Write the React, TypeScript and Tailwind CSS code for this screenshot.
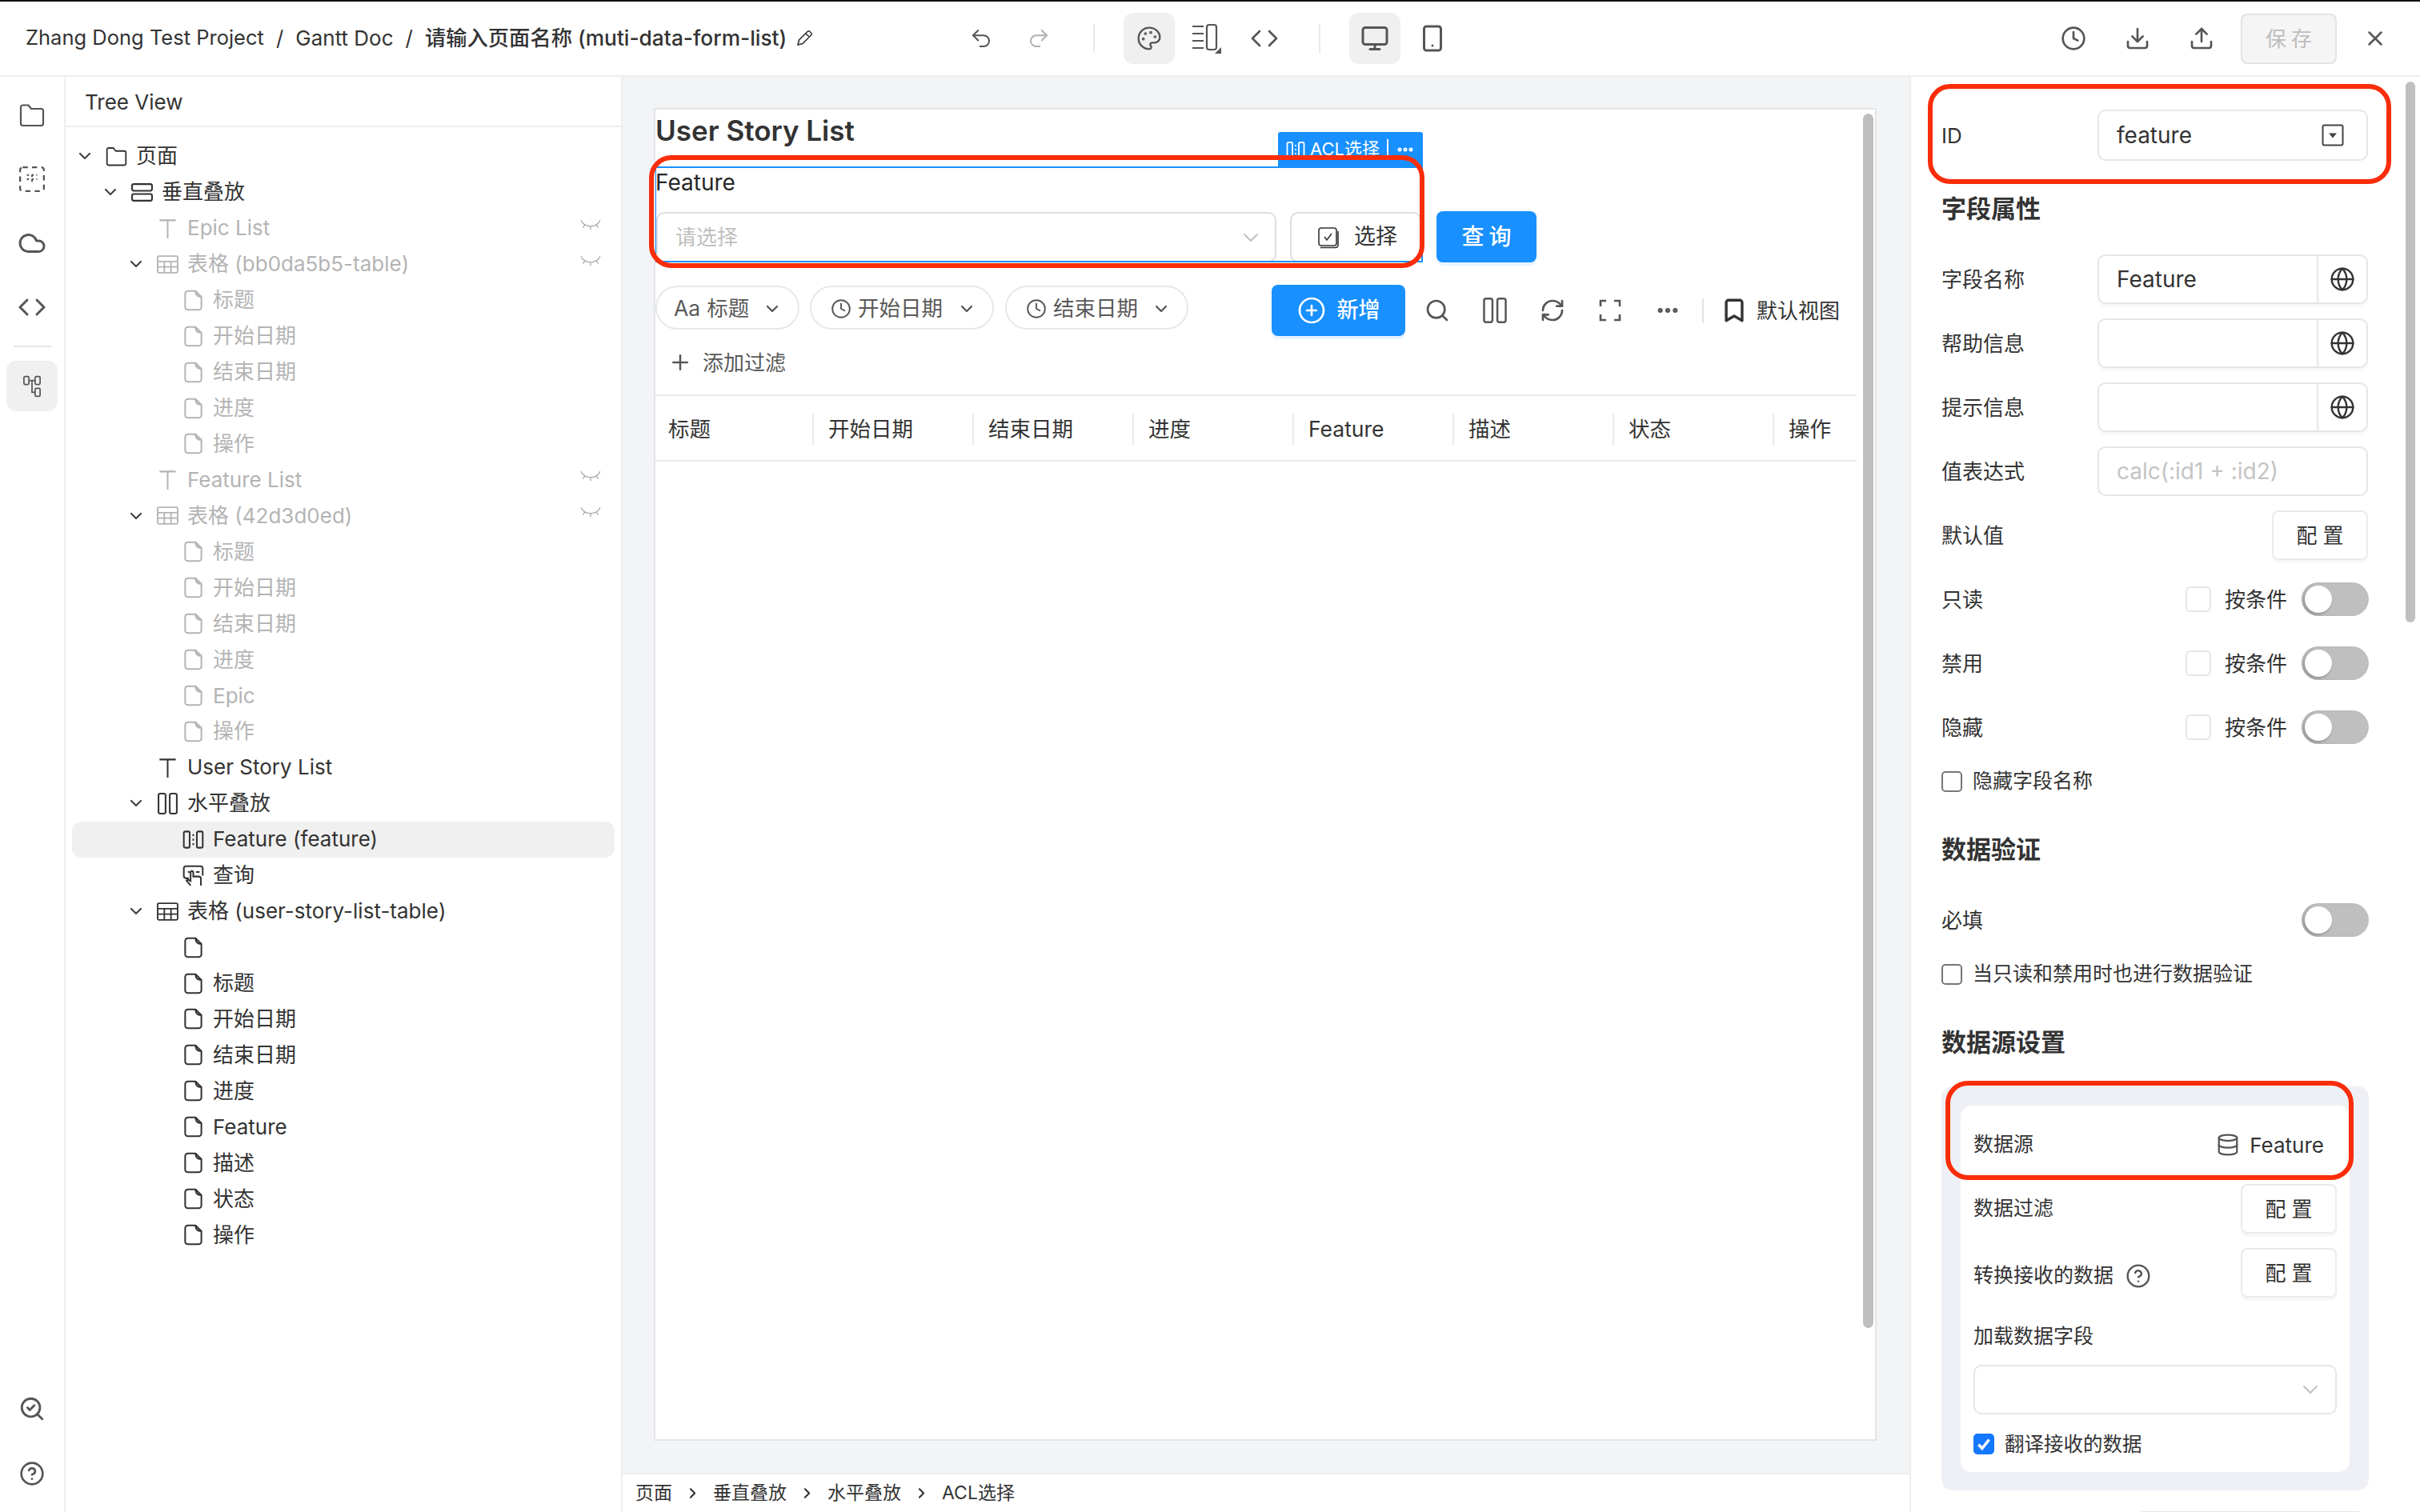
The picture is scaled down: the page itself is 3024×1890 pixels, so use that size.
import { ReactNode } from 'react';
import {
  Bookmark,
  ChevronDown,
  ChevronRight,
  CircleHelp,
  CirclePlus,
  Clock,
  Cloud,
  Code,
  Database,
  Download,
  Ellipsis,
  Globe,
  Monitor,
  Palette,
  Plus,
  Redo2,
  RefreshCw,
  Search,
  SearchCheck,
  Smartphone,
  Undo2,
  Upload,
  X,
} from 'lucide-react';

const FONT = 'font-[Inter,"Noto_Sans_CJK_SC",sans-serif]';

type IconProps = { className?: string };

const DocIcon = ({ className }: IconProps) => (
  <svg viewBox="0 0 24 24" className={className} fill="none" stroke="currentColor" strokeWidth="1.8">
    <path d="M6 1.5h8.5L21 8v11.5a3 3 0 0 1-3 3H6a3 3 0 0 1-3-3v-15a3 3 0 0 1 3-3z" />
    <path d="M14.5 1.5c0 4 2 6.5 6.5 6.5" />
  </svg>
);

const TextIcon = ({ className }: IconProps) => (
  <svg viewBox="0 0 24 24" className={className} fill="none" stroke="currentColor" strokeWidth="1.8">
    <path d="M3 3h18M12 3v20" />
  </svg>
);

const TableIcon = ({ className }: IconProps) => (
  <svg viewBox="0 0 26 24" className={className} fill="none" stroke="currentColor" strokeWidth="1.8">
    <rect x="1" y="2" width="24" height="20" rx="1.5" />
    <path d="M1 8.500h24M1 15h24M9 8.500V22M17 8.500V22" />
  </svg>
);

const HStackIcon = ({ className }: IconProps) => (
  <svg viewBox="0 0 24 26" className={className} fill="none" stroke="currentColor" strokeWidth="2">
    <rect x="1" y="1" width="8.5" height="24" rx="2" />
    <rect x="14.5" y="1" width="8.5" height="24" rx="2" />
  </svg>
);

const VStackIcon = ({ className }: IconProps) => (
  <svg viewBox="0 0 26 24" className={className} fill="none" stroke="currentColor" strokeWidth="2">
    <rect x="1" y="2" width="24" height="8" rx="2" />
    <rect x="1" y="14" width="24" height="8" rx="2" />
  </svg>
);

const EyeOffIcon = ({ className }: IconProps) => (
  <svg viewBox="0 0 24 16" className={className} fill="none" stroke="currentColor" strokeWidth="1.2">
    <path d="M1.500 3c5 7 16 7 21 0M1.500 3 1 1M22.500 3l.5-2M5 7 3 10M12 9v3.500M19 7l2 3" />
  </svg>
);

const FieldIcon = ({ className }: IconProps) => (
  <svg viewBox="0 0 24 24" className={className} fill="none" stroke="currentColor" strokeWidth="1.8">
    <rect x="1.5" y="3" width="6.5" height="18" rx="1.5" />
    <rect x="16" y="3" width="6.5" height="18" rx="1.5" />
    <path d="M12 6v2M12 11v2M12 16v2" />
  </svg>
);

const ButtonIcon = ({ className }: IconProps) => (
  <svg viewBox="0 0 24 24" className={className} fill="none" stroke="currentColor" strokeWidth="1.8">
    <path d="M7 15H4a2.5 2.5 0 0 1-2.5-2.5V4A2.5 2.5 0 0 1 4 1.5h16A2.5 2.5 0 0 1 22.5 4v8" />
    <path d="M9 23l-4.5-5.5 2-1 2.5 1.5V8.500a1.500 1.500 0 0 1 3 0V13h6a2.500 2.500 0 0 1 2.500 2.500V23" />
    <path d="M6 8h2M15 8h4" />
  </svg>
);

const DashedBoxIcon = ({ className }: IconProps) => (
  <svg viewBox="0 0 32 32" className={className} fill="none" stroke="currentColor" strokeWidth="2.200">
    <rect x="2" y="2" width="28" height="28" rx="3" strokeDasharray="6 5" />
    <path d="M10 11h12M10 16h12M16 11v10" strokeDasharray="2.500 3" strokeWidth="1.800" />
  </svg>
);

const FlowIcon = ({ className }: IconProps) => (
  <svg viewBox="0 0 28 36" className={className} fill="none" stroke="currentColor" strokeWidth="2.200">
    <rect x="1" y="2" width="8" height="13" rx="2" />
    <rect x="19" y="2" width="8" height="13" rx="2" />
    <rect x="19" y="21" width="8" height="13" rx="2" />
    <path d="M9 8.500h10M14 8.500V27.500h5" />
  </svg>
);

const FolderIcon = ({ className }: IconProps) => (
  <svg viewBox="0 0 32 32" className={className} fill="none" stroke="currentColor" strokeWidth="2.200" strokeLinejoin="round">
    <path d="M2 6a2.500 2.500 0 0 1 2.500-2.500h7L15 8h12.500A2.500 2.500 0 0 1 30 10.500v16a2.500 2.500 0 0 1-2.500 2.500h-23A2.500 2.500 0 0 1 2 26.500z" />
  </svg>
);

const ListColumnIcon = ({ className }: IconProps) => (
  <svg viewBox="0 0 38 38" className={className} fill="none" stroke="currentColor" strokeWidth="2.200">
    <path d="M1 4h14M1 13h14M1 22h14M1 31h14" />
    <rect x="19" y="2" width="12" height="31" rx="3" />
    <path d="M37 30v8h-8z" fill="currentColor" stroke="none" />
  </svg>
);

const SelectBoxIcon = ({ className }: IconProps) => (
  <svg viewBox="0 0 28 28" className={className} fill="none" stroke="currentColor" strokeWidth="1.600">
    <rect x="2" y="2" width="22" height="22" rx="3" />
    <path d="M9 13l3 4 6-8" />
    <path d="M4 26.500h19a3 3 0 0 0 3-3V6" />
  </svg>
);

const CornersIcon = ({ className }: IconProps) => (
  <svg viewBox="0 0 28 28" className={className} fill="none" stroke="currentColor" strokeWidth="2.600">
    <path d="M9 2H2v7M19 2h7v7M9 26H2v-7M19 26h7v-7" />
  </svg>
);

const DropIdIcon = ({ className }: IconProps) => (
  <svg viewBox="0 0 28 28" className={className} fill="none" stroke="currentColor" strokeWidth="2">
    <rect x="1.500" y="1.500" width="25" height="25" rx="2" />
    <path d="M9 11.500h10l-5 6z" fill="currentColor" stroke="none" />
  </svg>
);

const IconSlot = ({ children, className }: { children: ReactNode; className: string }) => (
  <div className={`flex h-[64px] shrink-0 items-center justify-center rounded-[12px] text-[#555555] ${className}`}>
    {children}
  </div>
);

type TreeRow = {
  level: 0 | 1 | 2 | 3;
  text: string;
  icon: (props: IconProps) => ReactNode;
  arrow?: boolean;
  dim?: boolean;
  eye?: boolean;
  active?: boolean;
};

const LEVEL_PADDING = ['pl-[4px]', 'pl-[36px]', 'pl-[68px]', 'pl-[100px]'];

const treeRows: TreeRow[] = [
  { level: 0, text: '页面', icon: FolderIcon, arrow: true },
  { level: 1, text: '垂直叠放', icon: VStackIcon, arrow: true },
  { level: 2, text: 'Epic List', icon: TextIcon, dim: true, eye: true },
  { level: 2, text: '表格 (bb0da5b5-table)', icon: TableIcon, dim: true, eye: true, arrow: true },
  { level: 3, text: '标题', icon: DocIcon, dim: true },
  { level: 3, text: '开始日期', icon: DocIcon, dim: true },
  { level: 3, text: '结束日期', icon: DocIcon, dim: true },
  { level: 3, text: '进度', icon: DocIcon, dim: true },
  { level: 3, text: '操作', icon: DocIcon, dim: true },
  { level: 2, text: 'Feature List', icon: TextIcon, dim: true, eye: true },
  { level: 2, text: '表格 (42d3d0ed)', icon: TableIcon, dim: true, eye: true, arrow: true },
  { level: 3, text: '标题', icon: DocIcon, dim: true },
  { level: 3, text: '开始日期', icon: DocIcon, dim: true },
  { level: 3, text: '结束日期', icon: DocIcon, dim: true },
  { level: 3, text: '进度', icon: DocIcon, dim: true },
  { level: 3, text: 'Epic', icon: DocIcon, dim: true },
  { level: 3, text: '操作', icon: DocIcon, dim: true },
  { level: 2, text: 'User Story List', icon: TextIcon },
  { level: 2, text: '水平叠放', icon: HStackIcon, arrow: true },
  { level: 3, text: 'Feature (feature)', icon: FieldIcon, active: true },
  { level: 3, text: '查询', icon: ButtonIcon },
  { level: 2, text: '表格 (user-story-list-table)', icon: TableIcon, arrow: true },
  { level: 3, text: '', icon: DocIcon },
  { level: 3, text: '标题', icon: DocIcon },
  { level: 3, text: '开始日期', icon: DocIcon },
  { level: 3, text: '结束日期', icon: DocIcon },
  { level: 3, text: '进度', icon: DocIcon },
  { level: 3, text: 'Feature', icon: DocIcon },
  { level: 3, text: '描述', icon: DocIcon },
  { level: 3, text: '状态', icon: DocIcon },
  { level: 3, text: '操作', icon: DocIcon },
];

const Tree = () => (
  <div className="mx-[8px] mt-[14px] flex flex-col">
    {treeRows.map((row, i) => {
      const Icon = row.icon;
      return (
        <div
          key={i}
          className={`flex h-[44.95px] items-center rounded-[12px] ${LEVEL_PADDING[row.level]} ${
            row.active ? 'bg-[#f0f0f0]' : ''
          } ${row.dim ? 'text-[#b4b4b4]' : 'text-[#333333]'}`}
        >
          <div className="flex w-[24px] shrink-0 justify-center text-[#444444]">
            {row.arrow && <ChevronDown size={24} strokeWidth={2.2} />}
          </div>
          <div className="ml-[13px] flex w-[28px] shrink-0 justify-center">
            <Icon className="h-[27px] w-[27px]" />
          </div>
          <span className="ml-[11px] text-[26px] leading-none">{row.text}</span>
          {row.eye && <EyeOffIcon className="mr-[17px] mb-[6px] ml-auto h-[17px] w-[26px] text-[#a8a8a8]" />}
        </div>
      );
    })}
  </div>
);

const Rail = () => (
  <div className="flex w-[82px] shrink-0 flex-col items-center border-r-2 border-[#eeeeee] text-[#555555]">
    <div className="mt-[16px] flex h-[64px] items-center">
      <FolderIcon className="h-[32px] w-[32px]" />
    </div>
    <div className="mt-[16px] flex h-[64px] items-center">
      <DashedBoxIcon className="h-[34px] w-[34px]" />
    </div>
    <div className="mt-[16px] flex h-[64px] items-center">
      <Cloud size={36} strokeWidth={2} />
    </div>
    <div className="mt-[16px] flex h-[64px] items-center">
      <Code size={36} strokeWidth={2} />
    </div>
    <div className="mt-[16px] h-[2px] w-[47px] bg-[#e5e5e5]" />
    <div className="mt-[17px] flex h-[63px] w-[64px] items-center justify-center rounded-[12px] bg-[#f0f0f0]">
      <FlowIcon className="h-[28px] w-[28px]" />
    </div>
    <div className="mt-auto flex h-[64px] items-center">
      <SearchCheck size={34} strokeWidth={2} />
    </div>
    <div className="mt-[17px] mb-[16px] flex h-[64px] items-center">
      <CircleHelp size={32} strokeWidth={2} />
    </div>
  </div>
);

const Chip = ({ icon, text, className }: { icon: ReactNode; text: string; className: string }) => (
  <div
    className={`mt-[1px] flex h-[55px] shrink-0 items-center rounded-full border-2 border-[#e8e8e8] pt-[2px] text-[26.5px] text-[#595959] ${className}`}
  >
    {icon}
    <span>{text}</span>
    <ChevronDown size={24} strokeWidth={2.4} className="mr-[20px] ml-auto" />
  </div>
);

const COLUMNS = ['开始日期', '结束日期', '进度', 'Feature', '描述', '状态'];

const Canvas = () => (
  <div className="flex min-w-0 flex-1 flex-col bg-[#f3f4f6]">
    <div className="flex-1 pt-[39px] pr-[41px] pl-[39px]">
      <div className="relative flex h-[1666px] flex-col overflow-hidden border-2 border-[#e4e5e8] bg-white">
        <div className="flex h-[52px] items-center text-[35px] leading-none font-semibold text-[#333333]">
          User Story List
        </div>

        <div className="mt-[18px] flex h-[121px] items-end">
          <div className="relative flex h-[120px] w-[958px] shrink-0 flex-col">
            <div className="mb-[17px] flex h-[40px] items-center text-[28px] text-[#262626]">Feature</div>
            <div className="flex h-[63px] items-stretch pl-[1px]">
              <div className="flex w-[775px] items-center justify-between rounded-[10px] border-2 border-[#dedede] pr-[14px] pl-[22px] text-[26px] text-[#bfbfbf]">
                <span>请选择</span>
                <ChevronDown size={32} strokeWidth={1.4} />
              </div>
              <div className="ml-[17px] flex w-[164px] items-center justify-center gap-[18px] rounded-[10px] border-2 border-[#dedede] pl-[4px] text-[27px] text-[#333333]">
                <SelectBoxIcon className="h-[28px] w-[28px]" />
                <span>选择</span>
              </div>
            </div>
            <div className="pointer-events-none absolute inset-y-0 -left-[1px] w-[960px] border-2 border-[#1890ff]" />
            <div className="absolute -top-[43px] right-[-1px] flex h-[43px] w-[181px] items-center justify-center gap-[6px] rounded-t-[3px] bg-[#1890ff] text-[22px] text-white">
              <FieldIcon className="h-[24px] w-[24px]" />
              <span>ACL选择</span>
              <span className="mx-[3px] h-[26px] w-[2px] bg-white" />
              <Ellipsis size={24} strokeWidth={3} />
            </div>
          </div>
          <div className="ml-[18px] flex h-[64px] w-[125px] shrink-0 items-center justify-center rounded-[8px] bg-[#1890ff] pl-[6px] text-[28px] font-medium tracking-[6px] text-white shadow-[0_4px_0_#e8f4ff]">
            查询
          </div>
        </div>

        <div className="mt-[28px] flex items-start">
          <Chip className="w-[180px] pl-[21px]" icon={<span className="mr-[8px]">Aa</span>} text="标题" />
          <Chip
            className="ml-[13px] w-[230px] pl-[24px]"
            icon={<Clock size={26} strokeWidth={1.8} className="mr-[8px]" />}
            text="开始日期"
          />
          <Chip
            className="ml-[14px] w-[229px] pl-[24px]"
            icon={<Clock size={26} strokeWidth={1.8} className="mr-[8px]" />}
            text="结束日期"
          />
          <div className="ml-[104px] flex h-[64px] w-[167px] shrink-0 items-center justify-center gap-[14px] rounded-[8px] bg-[#1890ff] text-[27px] font-medium text-white shadow-[0_4px_0_#e8f4ff]">
            <CirclePlus size={36} strokeWidth={1.8} />
            <span>新增</span>
          </div>
          <div className="ml-[4px] flex items-center">
            <IconSlot className="w-[72px]">
              <Search size={32} strokeWidth={2} />
            </IconSlot>
            <IconSlot className="w-[72px]">
              <HStackIcon className="h-[32px] w-[30px]" />
            </IconSlot>
            <IconSlot className="w-[72px]">
              <RefreshCw size={32} strokeWidth={2} />
            </IconSlot>
            <IconSlot className="w-[72px]">
              <CornersIcon className="h-[28px] w-[28px]" />
            </IconSlot>
            <IconSlot className="w-[72px]">
              <Ellipsis size={32} strokeWidth={2.6} />
            </IconSlot>
            <div className="ml-[7px] h-[31px] w-[2px] bg-[#e3e3e3]" />
            <Bookmark size={34} strokeWidth={2.4} className="ml-[21px] text-[#333333]" />
            <span className="ml-[11px] text-[26px] text-[#333333]">默认视图</span>
          </div>
        </div>

        <div className="mt-[14px] flex h-[38px] items-center pl-[16px] text-[26px] text-[#595959]">
          <Plus size={30} strokeWidth={2} />
          <span className="ml-[13px]">添加过滤</span>
        </div>

        <div className="mt-[21px] flex h-[84px] w-[1501px] items-center border-y-2 border-[#ececec] pt-[3px] text-[26.5px] text-[#333333]">
          <div className="w-[196px] shrink-0 pl-[16px]">标题</div>
          {COLUMNS.map((c) => (
            <div key={c} className="flex h-[40px] w-[200px] shrink-0 items-center border-l-2 border-[#ececec] pl-[18px]">
              {c}
            </div>
          ))}
          <div className="flex h-[40px] w-[105px] shrink-0 items-center border-l-2 border-[#ececec] pl-[18px]">操作</div>
        </div>

        <div className="absolute top-[5px] right-[2px] h-[1518px] w-[13px] rounded-full bg-[#bfbfbf]" />
      </div>
    </div>
    <div className="flex h-[49px] items-center gap-[15px] border-t-2 border-[#eeeeee] bg-white pl-[16px] text-[23px] text-[#333333]">
      <span>页面</span>
      <ChevronRight size={21} strokeWidth={2.4} />
      <span>垂直叠放</span>
      <ChevronRight size={21} strokeWidth={2.4} />
      <span>水平叠放</span>
      <ChevronRight size={21} strokeWidth={2.4} />
      <span>ACL选择</span>
    </div>
  </div>
);

const Input = ({ children, height = 'h-[62px]' }: { children?: ReactNode; height?: string }) => (
  <div className={`flex w-[338px] items-center rounded-[10px] border-2 border-[#e6e6e6] pl-[22px] text-[28px] ${height}`}>
    {children}
  </div>
);

const GlobeRow = ({ label, value, className }: { label: string; value?: string; className: string }) => (
  <div className={`flex items-center ${className}`}>
    <div className="w-[195px] shrink-0 text-[26px]">{label}</div>
    <div className="flex h-[62px] w-[338px] items-center rounded-[10px] border-2 border-[#e6e6e6] text-[28px] shadow-[0_4px_0_#fafafa]">
      <div className="flex h-full w-[274px] items-center border-r-2 border-[#e6e6e6] pl-[22px]">{value}</div>
      <div className="flex flex-1 justify-center">
        <Globe size={32} strokeWidth={1.8} />
      </div>
    </div>
  </div>
);

const ConfigButton = ({ className }: { className: string }) => (
  <div
    className={`flex h-[62px] shrink-0 items-center justify-center rounded-[8px] border-2 border-[#ebebeb] pl-[7px] text-[26px] tracking-[7px] shadow-[0_4px_0_#f8f8f8] ${className}`}
  >
    配置
  </div>
);

const Switch = () => (
  <div className="flex h-[42px] w-[84px] shrink-0 items-center rounded-full bg-[#bfbfbf] pl-[4px] shadow-[inset_3px_0_3px_rgba(0,0,0,0.08)]">
    <div className="h-[34px] w-[34px] rounded-full bg-white shadow-[-1px_2px_3px_rgba(0,0,0,0.25)]" />
  </div>
);

const CondRow = ({ label, className }: { label: string; className: string }) => (
  <div className={`flex h-[42px] items-center pr-[64px] ${className}`}>
    <span className="text-[26px]">{label}</span>
    <div className="ml-auto h-[32px] w-[32px] rounded-[6px] border-2 border-[#e6e6e6]" />
    <span className="mr-[18px] ml-[17px] text-[26px]">按条件</span>
    <Switch />
  </div>
);

const CheckRow = ({ label, className }: { label: string; className: string }) => (
  <div className={`flex h-[26px] items-center gap-[13px] ${className}`}>
    <div className="h-[26px] w-[26px] rounded-[5px] border-2 border-[#767676]" />
    <span className="text-[25px]">{label}</span>
  </div>
);

const Heading = ({ children, className }: { children: ReactNode; className: string }) => (
  <div className={`flex h-[40px] items-center text-[31px] font-semibold ${className}`}>{children}</div>
);

const Props = () => (
  <div className="relative flex w-[638px] shrink-0 flex-col overflow-hidden border-l-2 border-[#eeeeee] pt-[41px] pl-[38px] text-[#333333]">
    <div className="flex h-[64px] items-center">
      <div className="w-[195px] shrink-0 text-[26px]">ID</div>
      <Input height="h-[64px]">
        feature
        <DropIdIcon className="mr-[28px] ml-auto h-[28px] w-[28px] text-[#444444]" />
      </Input>
    </div>

    <Heading className="mt-[40px]">字段属性</Heading>

    <GlobeRow className="mt-[37px]" label="字段名称" value="Feature" />
    <GlobeRow className="mt-[18px]" label="帮助信息" />
    <GlobeRow className="mt-[18px]" label="提示信息" />
    <div className="mt-[18px] flex items-center">
      <div className="w-[195px] shrink-0 text-[26px]">值表达式</div>
      <Input>
        <span className="text-[#c4c4c4]">calc(:id1 + :id2)</span>
      </Input>
    </div>
    <div className="mt-[18px] flex items-center pr-[65px]">
      <span className="text-[26px]">默认值</span>
      <ConfigButton className="ml-auto w-[120px]" />
    </div>

    <CondRow className="mt-[28px]" label="只读" />
    <CondRow className="mt-[38px]" label="禁用" />
    <CondRow className="mt-[38px]" label="隐藏" />
    <CheckRow className="mt-[34px]" label="隐藏字段名称" />

    <Heading className="mt-[52px]">数据验证</Heading>
    <div className="mt-[47px] flex h-[42px] items-center justify-between pr-[64px]">
      <span className="text-[26px]">必填</span>
      <Switch />
    </div>
    <CheckRow className="mt-[34px]" label="当只读和禁用时也进行数据验证" />

    <Heading className="mt-[52px]">数据源设置</Heading>

    <div className="mt-[35px] h-[505px] w-[534px] shrink-0 rounded-[14px] bg-[#eff0f5] p-[24px]">
      <div className="h-[458px] rounded-[14px] bg-white px-[16px] pt-[29px]">
        <div className="flex h-[40px] items-center justify-between pr-[16px]">
          <span className="text-[25px]">数据源</span>
          <div className="flex items-center gap-[12px] text-[26px]">
            <Database size={30} strokeWidth={1.8} className="text-[#555555]" />
            Feature
          </div>
        </div>
        <div className="mt-[29px] flex items-center justify-between">
          <span className="text-[25px]">数据过滤</span>
          <ConfigButton className="w-[120px]" />
        </div>
        <div className="mt-[18px] flex items-start justify-between">
          <div className="mt-[16px] flex items-center gap-[15px]">
            <span className="text-[25px]">转换接收的数据</span>
            <CircleHelp size={32} strokeWidth={1.8} className="text-[#555555]" />
          </div>
          <ConfigButton className="w-[120px]" />
        </div>
        <div className="mt-[31px] flex h-[36px] items-center text-[25px]">加载数据字段</div>
        <div className="mt-[17px] flex h-[62px] items-center justify-end rounded-[10px] border-2 border-[#e6e6e6] pr-[15px] text-[#bfbfbf]">
          <ChevronDown size={32} strokeWidth={1.4} />
        </div>
        <div className="mt-[24px] flex h-[26px] items-center gap-[13px]">
          <div className="flex h-[26px] w-[26px] items-center justify-center rounded-[5px] bg-[#1677ff] text-white">
            <svg viewBox="0 0 20 20" className="h-[22px] w-[22px]" fill="none" stroke="currentColor" strokeWidth="3.200">
              <path d="M4 10.500l4 4.500 8-10" />
            </svg>
          </div>
          <span className="text-[24.5px]">翻译接收的数据</span>
        </div>
      </div>
    </div>

    <div className="mt-[26px] ml-[243px] h-[40px] w-[288px] shrink-0 rounded-t-[10px] border-2 border-[#e6e6e6]" />

    <div className="absolute top-[6px] right-[6px] h-[676px] w-[12px] rounded-full bg-[#bfbfbf]" />
  </div>
);

const Header = () => (
  <div className="flex h-[96px] shrink-0 items-center border-t-2 border-b-2 border-t-[#111111] border-b-[#eeeeee] bg-white text-[#333333]">
    <div className="mb-[1px] flex w-[1190px] shrink-0 items-center pl-[32px] text-[26px] whitespace-nowrap">
      <span className="text-[25.5px]">Zhang Dong Test Project</span>
      <span className="mx-[15px]">/</span>
      <span>Gantt Doc</span>
      <span className="mx-[15px]">/</span>
      <span className="text-[26.3px] font-medium">请输入页面名称 (muti-data-form-list)</span>
      <svg viewBox="0 0 24 24" className="ml-[10px] h-[24px] w-[24px]" fill="none" stroke="currentColor" strokeWidth="1.600">
        <path d="M4 20l1.500-6L16 3.500a2 2 0 0 1 3 0l1.500 1.500a2 2 0 0 1 0 3L10 18.500zM14 6l4.500 4.500" />
      </svg>
    </div>
    <IconSlot className="w-[72px]">
      <Undo2 size={30} strokeWidth={1.6} />
    </IconSlot>
    <IconSlot className="w-[72px] text-[#b0b0b0]">
      <Redo2 size={30} strokeWidth={1.6} />
    </IconSlot>
    <div className="ml-[32px] h-[36px] w-[2px] bg-[#e8e8e8]" />
    <IconSlot className="ml-[36px] w-[64px] bg-[#f0f0f0]">
      <Palette size={32} strokeWidth={1.8} />
    </IconSlot>
    <IconSlot className="ml-[8px] w-[64px]">
      <ListColumnIcon className="h-[38px] w-[38px]" />
    </IconSlot>
    <IconSlot className="ml-[8px] w-[64px]">
      <Code size={36} strokeWidth={1.8} />
    </IconSlot>
    <div className="ml-[36px] h-[36px] w-[2px] bg-[#e8e8e8]" />
    <IconSlot className="ml-[36px] w-[64px] bg-[#f0f0f0]">
      <Monitor size={36} strokeWidth={2} />
    </IconSlot>
    <IconSlot className="ml-[8px] w-[64px]">
      <Smartphone size={36} strokeWidth={2} />
    </IconSlot>
    <div className="ml-auto flex items-center pr-[32px]">
      <IconSlot className="w-[80px]">
        <Clock size={32} strokeWidth={2} />
      </IconSlot>
      <IconSlot className="w-[80px]">
        <Download size={32} strokeWidth={2} />
      </IconSlot>
      <IconSlot className="w-[80px]">
        <Upload size={32} strokeWidth={2} />
      </IconSlot>
      <div className="ml-[9px] flex h-[63px] w-[120px] items-center justify-center rounded-[8px] border-2 border-[#e3e3e3] bg-[#f5f5f5] pl-[6px] text-[26px] tracking-[6px] text-[#bdbdbd]">
        保存
      </div>
      <IconSlot className="ml-[24px] w-[48px]">
        <X size={30} strokeWidth={2} />
      </IconSlot>
    </div>
  </div>
);

export default function App() {
  return (
    <div className={`relative flex h-[1890px] w-[3024px] flex-col overflow-hidden bg-white ${FONT}`}>
      <Header />
      <div className="flex min-h-0 flex-1">
        <Rail />
        <div className="flex w-[696px] shrink-0 flex-col border-r-2 border-[#eeeeee]">
          <div className="flex h-[63px] items-center border-b-2 border-[#eeeeee] pt-[2px] pl-[24px] text-[26px] text-[#333333]">
            Tree View
          </div>
          <Tree />
        </div>
        <Canvas />
        <Props />
      </div>

      {/* red review marks lying over the page */}
      <div className="pointer-events-none absolute top-[194px] left-[811px] h-[141px] w-[969px] rounded-[28px] border-[6px] border-[#fa2d0a]" />
      <div className="pointer-events-none absolute top-[105px] left-[2409px] h-[125px] w-[579px] rounded-[28px] border-[6px] border-[#fa2d0a]" />
      <div className="pointer-events-none absolute top-[1351px] left-[2431px] h-[124px] w-[510px] rounded-[28px] border-[6px] border-[#fa2d0a]" />
    </div>
  );
}
